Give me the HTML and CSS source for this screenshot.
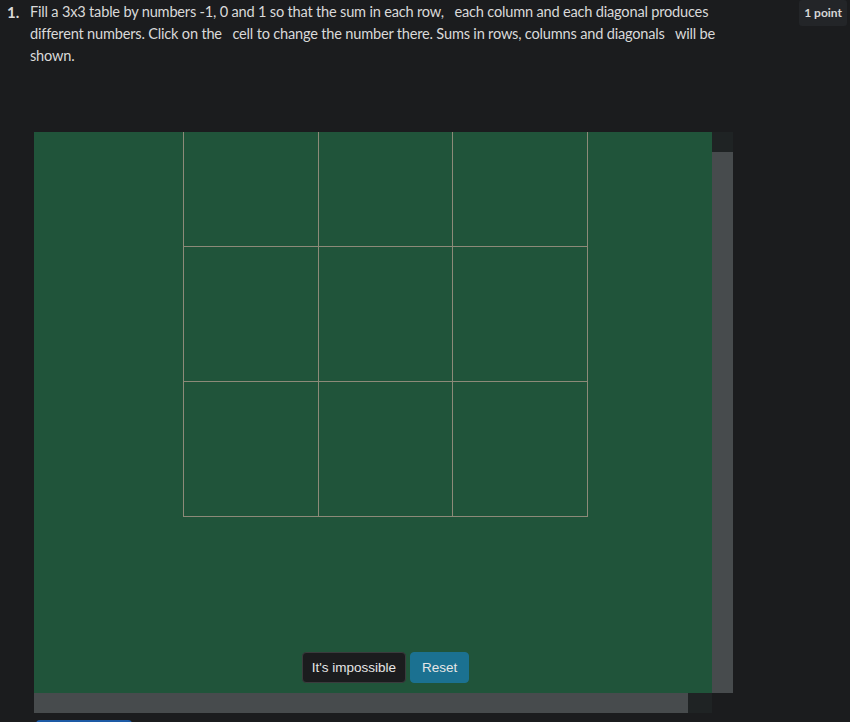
FILE: index.html
```html
<!DOCTYPE html>
<html>
<head>
<meta charset="utf-8">
<link rel="stylesheet" href="styles.css">
</head>
<body>
<div class="question">
  <div class="qnum">1.</div>
  <div class="qtext">Fill a 3x3 table by numbers -1, 0 and 1 so that the sum in each row, &nbsp; each column and each diagonal produces different numbers. Click on the &nbsp; cell to change the number there. Sums in rows, columns and diagonals &nbsp; will be shown.</div>
  <div class="badge">1 point</div>
</div>
<div class="frame">
  <div class="viewport">
    <div class="canvas">
      <div class="grid">
        <div class="cell"></div><div class="cell"></div><div class="cell"></div>
        <div class="cell"></div><div class="cell"></div><div class="cell"></div>
        <div class="cell"></div><div class="cell"></div><div class="cell"></div>
      </div>
      <div class="actions">
        <button class="btn btn-dark">It's impossible</button>
        <button class="btn btn-teal">Reset</button>
      </div>
    </div>
  </div>
  <div class="vbar"><div class="vthumb"></div></div>
  <div class="hbar"><div class="hthumb"></div></div>
  <div class="corner"></div>
</div>
<div class="footer">
  <button class="submit">Submit</button>
</div>
</body>
</html>
```
FILE: styles.css
```css
html, body {
  margin: 0;
  padding: 0;
  background: #1b1c1e;
  overflow: hidden;
}
body {
  font-family: "Lato", "Noto Sans", sans-serif;
  color: #d9d9d9;
}
.question {
  display: flex;
  align-items: flex-start;
  padding: 1px 3px 0 7px;
}
.qnum {
  width: 23px;
  flex: none;
  font-weight: 700;
  font-size: 15px;
  line-height: 22px;
}
.qtext {
  flex: 1;
  font-size: 14.6px;
  line-height: 22px;
  max-width: 700px;
  letter-spacing: -0.2px;
}
.badge {
  margin-left: auto;
  margin-top: -1px;
  background: #232528;
  border-radius: 3px;
  padding: 4px 5px 5px 5px;
  font-size: 12px;
  font-weight: 700;
  line-height: 17px;
  color: #d6d6d6;
}
.frame {
  margin: 65px 0 0 34px;
  width: 699px;
  height: 581px;
  display: grid;
  grid-template-columns: 678px 21px;
  grid-template-rows: 561px 20px;
}
.viewport {
  overflow: hidden;
  background: #20543a;
}
.vbar {
  background: #1f2324;
  display: flex;
  flex-direction: column;
  justify-content: flex-end;
}
.vthumb {
  height: 541px;
  background: #474b4d;
}
.hbar {
  background: #1f2324;
  display: flex;
}
.hthumb {
  width: 654px;
  background: #474b4d;
}
.corner {
  background: #1b1c1e;
}
.canvas {
  width: 703px;
  height: 581px;
  margin-top: -21px;
  background: #20543a;
  display: flex;
  flex-direction: column;
  align-items: center;
}
.grid {
  display: grid;
  grid-template-columns: 134px 133px 134px;
  grid-template-rows: repeat(3, 134px);
  gap: 1px;
  padding: 1px;
  background: #8c8a78;
}
.cell {
  background: #20543a;
}
.actions {
  display: flex;
  gap: 4px;
  margin-top: 135px;
}
.btn {
  font-family: "Liberation Sans", Arial, sans-serif;
  font-size: 13.5px;
  height: 31px;
  padding: 0 9px;
  border-radius: 4px;
  color: #e6e6e6;
  cursor: pointer;
}
.btn-dark {
  background: #1b1c1e;
  border: 1px solid #3a3b3d;
}
.btn-teal {
  background: #1b7191;
  border: 1px solid #1b7191;
  padding: 0 11px;
}
.footer {
  margin: 7px 0 0 36px;
}
.submit {
  width: 96px;
  height: 40px;
  padding-top: 16px;
  border: none;
  border-radius: 4px;
  background: #1d5aa5;
  color: #fff;
  font-family: "Liberation Sans", Arial, sans-serif;
}
```
